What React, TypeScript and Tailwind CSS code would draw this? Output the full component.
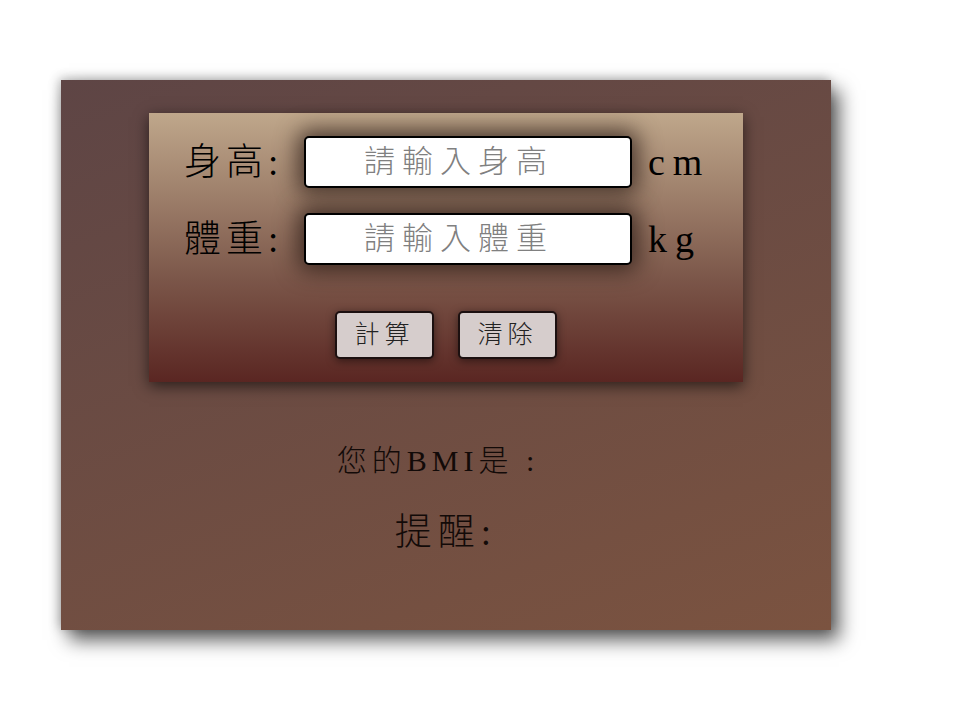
const font = "font-['Liberation_Serif','Noto_Sans_CJK_TC',serif]";

function Field({ label, placeholder, unit }: { label: string; placeholder: string; unit: string }) {
  return (
    <div className="flex items-center h-[52px]">
      <label className="w-[120px] text-[37px] font-light tracking-[5px] text-black leading-none">{label}</label>
      <input
        type="text"
        placeholder={placeholder}
        className="w-[328px] h-[52px] rounded-[5px] border-2 border-black bg-white text-center text-[31px] font-light tracking-[7px] pr-[18px] placeholder:text-[#808080] shadow-[0_0_22px_6px_rgba(40,25,20,0.75)] outline-none"
      />
      <span className="ml-4 text-[38px] tracking-[8px] text-black leading-none">{unit}</span>
    </div>
  );
}

function Btn({ children }: { children: string }) {
  return (
    <button className="w-[99px] h-[48px] rounded-[5px] border-2 border-[#1c1010] bg-[#d6cdcc] text-[25px] font-light tracking-[5px] text-[#222] shadow-[0_2px_8px_rgba(0,0,0,0.5)]">
      {children}
    </button>
  );
}

export default function App() {
  return (
    <div className={`min-h-screen bg-white pt-[80px] pl-[61px] ${font}`}>
      <div className="w-[770px] h-[550px] pt-[33px] bg-[linear-gradient(160deg,#5e4545,#7b5340)] shadow-[8px_10px_18px_rgba(0,0,0,0.65),-2px_-2px_10px_rgba(0,0,0,0.25)]">
        <div className="ml-[88px] w-[594px] h-[269px] pt-[23px] pl-[35px] bg-[linear-gradient(to_bottom,#bfa78b,#7b5649_62%,#5a2622)] shadow-[0_4px_14px_rgba(0,0,0,0.6)]">
          <div className="flex flex-col gap-[25px]">
            <Field label="身高:" placeholder="請輸入身高" unit="cm" />
            <Field label="體重:" placeholder="請輸入體重" unit="kg" />
          </div>
          <div className="flex justify-center gap-6 mt-[46px] pr-[35px]">
            <Btn>計算</Btn>
            <Btn>清除</Btn>
          </div>
        </div>
        <p className="mt-[64px] pr-[16px] text-center text-[30px] font-light tracking-[5px] text-[#120a08] leading-none">您的BMI是 :</p>
        <p className="mt-[38px] text-center text-[37px] font-light tracking-[6px] text-[#120a08] leading-none">提醒:</p>
      </div>
    </div>
  );
}
